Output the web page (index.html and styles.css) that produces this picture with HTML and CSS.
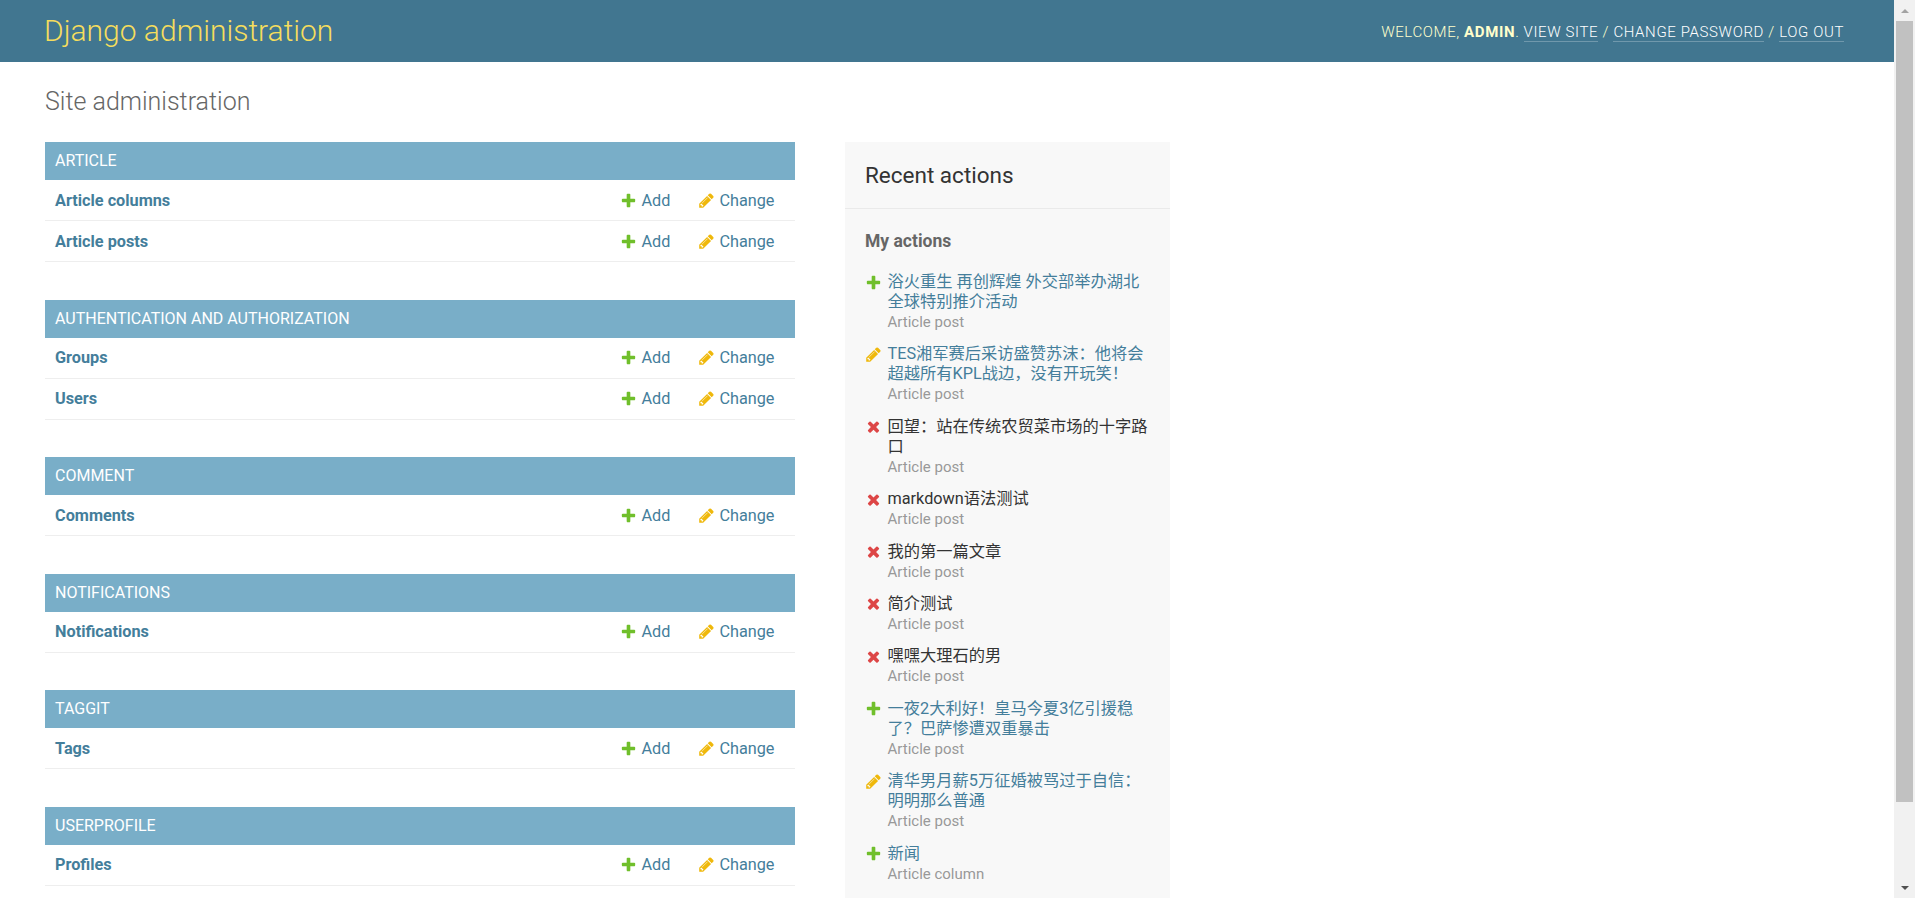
FILE: index.html
```html
<!DOCTYPE html>
<html lang="zh-CN">
<head>
<meta charset="utf-8">
<title>Site administration | Django site admin</title>
<link rel="stylesheet" href="styles.css">
</head>
<body>
<svg class="sprite" xmlns="http://www.w3.org/2000/svg">
  <symbol id="i-add" viewBox="0 0 1792 1792"><path fill="#70bf2b" d="M1600 796v192q0 40-28 68t-68 28h-416v416q0 40-28 68t-68 28h-192q-40 0-68-28t-28-68v-416h-416q-40 0-68-28t-28-68v-192q0-40 28-68t68-28h416v-416q0-40 28-68t68-28h192q40 0 68 28t28 68v416h416q40 0 68 28t28 68z"/></symbol>
  <symbol id="i-change" viewBox="0 0 1792 1792"><path fill="#efb80b" d="M491 1536l91-91-235-235-91 91v107h128v128h107zm523-928q0-22-22-22-10 0-17 7l-542 542q-7 7-7 17 0 22 22 22 10 0 17-7l542-542q7-7 7-17zm-54-192l416 416-832 832h-416v-416zm683 96q0 53-37 90l-166 166-416-416 166-165q36-38 90-38 53 0 91 38l235 234q37 39 37 91z"/></symbol>
  <symbol id="i-delete" viewBox="0 0 1792 1792"><path fill="#dd4646" d="M1490 1322q0 40-28 68l-136 136q-28 28-68 28t-68-28l-294-294-294 294q-28 28-68 28t-68-28l-136-136q-28-28-28-68t28-68l294-294-294-294q-28-28-28-68t28-68l136-136q28-28 68-28t68 28l294 294 294-294q28-28 68-28t68 28l136 136q28 28 28 68t-28 68l-294 294 294 294q28 28 28 68z"/></symbol>
</svg>
<div class="window">
  <div class="page">
    <header class="header">
      <h1 class="branding">Django administration</h1>
      <div class="user-tools">Welcome, <strong>admin</strong>. <a href="#">View site</a> / <a href="#">Change password</a> / <a href="#">Log out</a></div>
    </header>
    <main class="content">
      <h1 class="page-title">Site administration</h1>
      <div class="columns">
        <div class="content-main">
          <section class="module">
            <h2 class="caption">Article</h2>
            <div class="model-row"><a class="model-name" href="#">Article columns</a><a class="addlink" href="#"><svg class="icon"><use href="#i-add"/></svg>Add</a><a class="changelink" href="#"><svg class="icon"><use href="#i-change"/></svg>Change</a></div>
            <div class="model-row"><a class="model-name" href="#">Article posts</a><a class="addlink" href="#"><svg class="icon"><use href="#i-add"/></svg>Add</a><a class="changelink" href="#"><svg class="icon"><use href="#i-change"/></svg>Change</a></div>
          </section>
          <section class="module">
            <h2 class="caption">Authentication and Authorization</h2>
            <div class="model-row"><a class="model-name" href="#">Groups</a><a class="addlink" href="#"><svg class="icon"><use href="#i-add"/></svg>Add</a><a class="changelink" href="#"><svg class="icon"><use href="#i-change"/></svg>Change</a></div>
            <div class="model-row"><a class="model-name" href="#">Users</a><a class="addlink" href="#"><svg class="icon"><use href="#i-add"/></svg>Add</a><a class="changelink" href="#"><svg class="icon"><use href="#i-change"/></svg>Change</a></div>
          </section>
          <section class="module">
            <h2 class="caption">Comment</h2>
            <div class="model-row"><a class="model-name" href="#">Comments</a><a class="addlink" href="#"><svg class="icon"><use href="#i-add"/></svg>Add</a><a class="changelink" href="#"><svg class="icon"><use href="#i-change"/></svg>Change</a></div>
          </section>
          <section class="module">
            <h2 class="caption">Notifications</h2>
            <div class="model-row"><a class="model-name" href="#">Notifications</a><a class="addlink" href="#"><svg class="icon"><use href="#i-add"/></svg>Add</a><a class="changelink" href="#"><svg class="icon"><use href="#i-change"/></svg>Change</a></div>
          </section>
          <section class="module">
            <h2 class="caption">Taggit</h2>
            <div class="model-row"><a class="model-name" href="#">Tags</a><a class="addlink" href="#"><svg class="icon"><use href="#i-add"/></svg>Add</a><a class="changelink" href="#"><svg class="icon"><use href="#i-change"/></svg>Change</a></div>
          </section>
          <section class="module">
            <h2 class="caption">Userprofile</h2>
            <div class="model-row"><a class="model-name" href="#">Profiles</a><a class="addlink" href="#"><svg class="icon"><use href="#i-add"/></svg>Add</a><a class="changelink" href="#"><svg class="icon"><use href="#i-change"/></svg>Change</a></div>
          </section>
        </div>
        <aside class="recent">
          <h2 class="recent-title">Recent actions</h2>
          <h3 class="recent-sub">My actions</h3>
          <ul class="actionlist">
            <li><svg class="icon"><use href="#i-add"/></svg><div class="action-text"><a href="#">浴火重生 再创辉煌 外交部举办湖北全球特别推介活动</a><br><span class="mini">Article post</span></div></li>
            <li><svg class="icon"><use href="#i-change"/></svg><div class="action-text"><a href="#">TES湘军赛后采访盛赞苏沫：他将会超越所有KPL战边，没有开玩笑！</a><br><span class="mini">Article post</span></div></li>
            <li><svg class="icon"><use href="#i-delete"/></svg><div class="action-text">回望：站在传统农贸菜市场的十字路口<br><span class="mini">Article post</span></div></li>
            <li><svg class="icon"><use href="#i-delete"/></svg><div class="action-text">markdown语法测试<br><span class="mini">Article post</span></div></li>
            <li><svg class="icon"><use href="#i-delete"/></svg><div class="action-text">我的第一篇文章<br><span class="mini">Article post</span></div></li>
            <li><svg class="icon"><use href="#i-delete"/></svg><div class="action-text">简介测试<br><span class="mini">Article post</span></div></li>
            <li><svg class="icon"><use href="#i-delete"/></svg><div class="action-text">嘿嘿大理石的男<br><span class="mini">Article post</span></div></li>
            <li><svg class="icon"><use href="#i-add"/></svg><div class="action-text"><a href="#">一夜2大利好！皇马今夏3亿引援稳了？巴萨惨遭双重暴击</a><br><span class="mini">Article post</span></div></li>
            <li><svg class="icon"><use href="#i-change"/></svg><div class="action-text"><a href="#">清华男月薪5万征婚被骂过于自信：明明那么普通</a><br><span class="mini">Article post</span></div></li>
            <li><svg class="icon"><use href="#i-add"/></svg><div class="action-text"><a href="#">新闻</a><br><span class="mini">Article column</span></div></li>
          </ul>
        </aside>
      </div>
    </main>
  </div>
  <div class="scrollbar">
    <div class="sb-btn"><span class="sb-arrow sb-up"></span></div>
    <div class="sb-track"><div class="sb-thumb"></div></div>
    <div class="sb-btn"><span class="sb-arrow sb-down"></span></div>
  </div>
</div>
</body>
</html>
```

FILE: styles.css
```css
html, body {
  margin: 0;
  padding: 0;
}

body {
  font-family: Roboto, "Noto Sans CJK SC", "Liberation Sans", sans-serif;
  color: #333;
  background: #fff;
  font-size: 16.25px;
}

.sprite {
  display: none;
}

.window {
  display: flex;
  height: 898px;
  overflow: hidden;
}

.page {
  flex: 1;
  min-width: 0;
  overflow: hidden;
}

/* Header */
.header {
  height: 62px;
  box-sizing: border-box;
  display: flex;
  align-items: center;
  justify-content: space-between;
  padding: 0 50px 0 44px;
  background: #417690;
  color: #ffc;
}

.branding {
  margin: 0;
  font-size: 30px;
  font-weight: 300;
  line-height: 34px;
  color: #f5dd5d;
}

.user-tools {
  font-size: 15px;
  font-weight: 300;
  letter-spacing: 0.62px;
  line-height: 20px;
  text-transform: uppercase;
  text-align: right;
  margin-top: 1px;
}

.user-tools strong {
  font-weight: 700;
}

.user-tools a {
  color: #fff;
  text-decoration: none;
  border-bottom: 1px solid rgba(255, 255, 255, 0.25);
}

/* Content */
.content {
  padding: 25px 45px;
}

.page-title {
  margin: 0 0 25px;
  font-size: 25px;
  font-weight: 300;
  line-height: 30px;
  color: #666;
}

.columns {
  display: flex;
  align-items: flex-start;
  gap: 50px;
}

.content-main {
  width: 750px;
  flex: none;
}

.module {
  margin-bottom: 37.5px;
}

.caption {
  margin: 0;
  height: 38px;
  line-height: 38px;
  padding: 0 10px;
  background: #79aec8;
  color: #fff;
  font-size: 16px;
  font-weight: 400;
  text-transform: uppercase;
}

.model-row {
  display: flex;
  align-items: center;
  height: 40px;
  border-bottom: 1px solid #eee;
  padding: 0 20.5px 0 10px;
  font-size: 16.25px;
}

.model-name {
  flex: 1;
  font-weight: 700;
  color: #447e9b;
  text-decoration: none;
}

.addlink,
.changelink {
  display: flex;
  align-items: center;
  gap: 4px;
  color: #447e9b;
  text-decoration: none;
}

.addlink {
  margin-right: 28px;
}

.icon {
  width: 17px;
  height: 17px;
  flex: none;
}

/* Recent actions */
.recent {
  width: 325px;
  flex: none;
  background: #f8f8f8;
}

.recent-title {
  margin: 0 0 22px;
  padding: 20px;
  font-size: 22.5px;
  font-weight: 400;
  line-height: 26px;
  color: #333;
  border-bottom: 1px solid #eaeaea;
}

.recent-sub {
  margin: 0 0 20px;
  padding: 0 20px;
  font-size: 17.5px;
  font-weight: 700;
  line-height: 21px;
  color: #666;
}

.actionlist {
  list-style: none;
  margin: 20px 0 20px 20px;
  padding: 0;
}

.actionlist li {
  display: flex;
  align-items: flex-start;
  margin-bottom: 12.4px;
  font-size: 16.25px;
  line-height: 20px;
  color: #333;
}

.actionlist .icon {
  margin: 1.5px 5.5px 0 0;
}

.action-text {
  width: 261px;
}

.action-text a {
  color: #447e9b;
  text-decoration: none;
}

.mini {
  font-size: 15px;
  color: #999;
}

/* Fake scrollbar */
.scrollbar {
  width: 21px;
  flex: none;
  background: #f1f1f1;
  display: flex;
  flex-direction: column;
}

.sb-btn {
  height: 21px;
  flex: none;
  display: flex;
  align-items: center;
  justify-content: center;
}

.sb-arrow {
  width: 0;
  height: 0;
  border-left: 4px solid transparent;
  border-right: 4px solid transparent;
}

.sb-up {
  border-bottom: 4px solid #a3a3a3;
}

.sb-down {
  border-top: 4px solid #505050;
}

.sb-track {
  flex: 1;
  padding: 0 2px;
}

.sb-thumb {
  height: 781px;
  background: #c1c1c1;
}
```
